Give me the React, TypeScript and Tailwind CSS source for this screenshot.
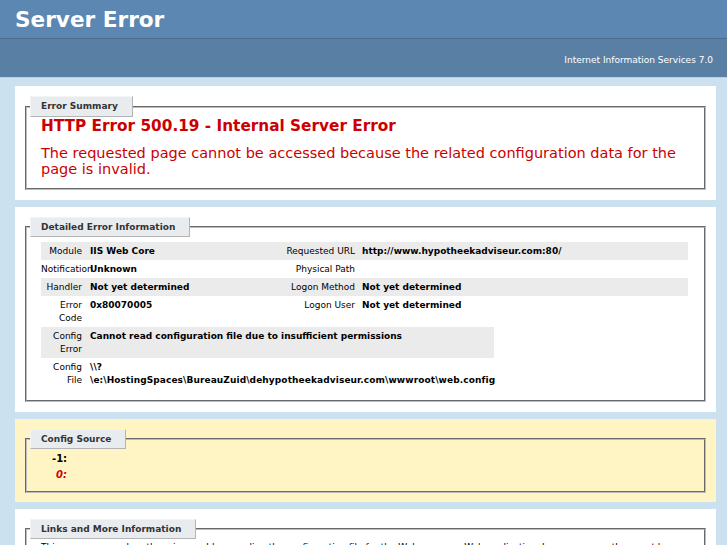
import React from 'react';

const Legend: React.FC<{ title: string; tall?: boolean }> = ({ title, tall }) => (
  <legend
    className={`ml-[-11px] border-t border-l border-t-[#f4f4f4] border-l-[#f4f4f4] border-r border-b border-r-[#b4b4b4] border-b-[#b4b4b4] bg-[#e8ecef] pl-[10px] pr-[14px] font-bold leading-[13px] text-[#333333] ${
      tall ? 'pt-[3px] pb-[3px]' : 'pt-[3px] pb-[2px]'
    }`}
  >
    {title}
  </legend>
);

const fieldsetCls = 'border-2 border-[#bdbdbd] [border-style:groove] px-[14px]';

interface DetailRow {
  left: string;
  leftValue: string;
  right: string;
  rightValue: string;
  alt: boolean;
}

const rows: DetailRow[] = [
  { left: 'Module', leftValue: 'IIS Web Core', right: 'Requested URL', rightValue: 'http://www.hypotheekadviseur.com:80/', alt: true },
  { left: 'Notification', leftValue: 'Unknown', right: 'Physical Path', rightValue: '', alt: false },
  { left: 'Handler', leftValue: 'Not yet determined', right: 'Logon Method', rightValue: 'Not yet determined', alt: true },
  { left: 'Error Code', leftValue: '0x80070005', right: 'Logon User', rightValue: 'Not yet determined', alt: false },
];

const App: React.FC = () => {
  return (
    <div className="min-h-[545px] bg-[#CBE1EF] font-['DejaVu_Sans',Verdana,sans-serif] text-[9px] text-black">
      {/* header */}
      <div className="h-[38px] bg-[#5C87B2] px-[15px] pt-[7px]">
        <h1 className="text-[21.6px] font-bold leading-[25px] text-white">Server Error</h1>
      </div>
      <div className="h-[40px] border-t border-b border-t-[#4A6C8E] border-b-[#C1CFDD] bg-[#5A7FA5] px-[14px] pt-[15px] text-right leading-[12px] text-white">
        Internet Information Services 7.0
      </div>

      <div className="ml-[15px] mr-[11px] pt-[8px]">
        {/* Error Summary */}
        <div className="bg-white p-[10px]">
          <fieldset className={`${fieldsetCls} pb-[11px]`}>
            <Legend title="Error Summary" tall />
            <h2 className="text-[15.3px] font-bold leading-[18px] text-[#CC0000]">
              HTTP Error 500.19 - Internal Server Error
            </h2>
            <h3 className="mt-[10px] text-[14.5px] leading-[16px] text-[#CC0000]">
              The requested page cannot be accessed because the related configuration data for the page is invalid.
            </h3>
          </fieldset>
        </div>

        {/* Detailed Error Information */}
        <div className="mt-[7px] bg-white p-[10px]">
          <fieldset className={`${fieldsetCls} pb-[11px]`}>
            <Legend title="Detailed Error Information" />
            <div className="mt-[5px] mr-[2px]">
              {rows.map((r) => (
                <div key={r.left} className={`flex leading-[13px] py-[2.5px] ${r.alt ? 'bg-[#ebebeb]' : ''}`}>
                  <div className="w-[49px] shrink-0 pr-[8px] text-right">{r.left}</div>
                  <div className="w-[172px] shrink-0 font-bold">{r.leftValue}</div>
                  <div className="w-[100px] shrink-0 pr-[7px] text-right">{r.right}</div>
                  <div className="flex-1 font-bold">{r.rightValue}</div>
                </div>
              ))}
              <div className="w-[453px]">
                <div className="flex bg-[#ebebeb] py-[2.5px] leading-[13px]">
                  <div className="w-[49px] shrink-0 pr-[8px] text-right">Config Error</div>
                  <div className="flex-1 font-bold">Cannot read configuration file due to insufficient permissions</div>
                </div>
                <div className="flex py-[2.5px] leading-[13px]">
                  <div className="w-[49px] shrink-0 pr-[8px] text-right">Config File</div>
                  <div className="flex-1 whitespace-nowrap font-bold tracking-[0.1px]">
                    {'\\\\?'}
                    <br />
                    {'\\e:\\HostingSpaces\\BureauZuid\\dehypotheekadviseur.com\\wwwroot\\web.config'}
                  </div>
                </div>
              </div>
            </div>
          </fieldset>
        </div>

        {/* Config Source */}
        <div className="mt-[7px] bg-[#fff5c4] p-[10px] pb-[9px]">
          <fieldset className={`${fieldsetCls} pb-[8px]`}>
            <Legend title="Config Source" />
            <div className="pt-[2px] text-[10px] font-bold leading-[16px]">
              <div className="pl-[11px]">-1:</div>
              <div className="pl-[15px] italic text-[#CC0000]">0:</div>
            </div>
          </fieldset>
        </div>

        {/* Links and More Information */}
        <div className="mt-[7px] bg-white p-[10px]">
          <fieldset className={`${fieldsetCls} pb-[10px]`}>
            <Legend title="Links and More Information" />
            <p className="mt-[2px] leading-[13px]">
              This error occurs when there is a problem reading the configuration file for the Web server or Web
              application. In some cases, the event logs may contain more information about what caused this error.
            </p>
          </fieldset>
        </div>
      </div>
    </div>
  );
};

export default App;
